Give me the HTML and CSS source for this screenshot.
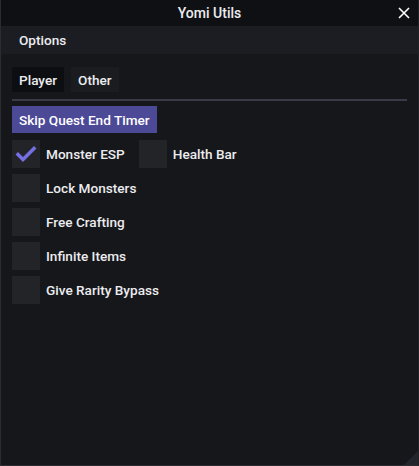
FILE: index.html
```html
<!DOCTYPE html>
<html lang="en">
<head>
  <meta charset="UTF-8" />
  <title>Yomi Utils</title>
  <link rel="stylesheet" href="styles.css">
</head>
<body>
  <div class="window">
    <div class="titlebar">
      <span class="title">Yomi Utils</span>
      <svg class="close" viewBox="0 0 12 12">
        <path d="M1 1L11 11M11 1L1 11"/>
      </svg>
    </div>

    <div class="menubar">
      <span class="menu-item">Options</span>
    </div>

    <div class="content">
      <div class="tabs">
        <span class="tab active">Player</span>
        <span class="tab">Other</span>
      </div>
      <div class="separator"></div>

      <button class="btn">Skip Quest End Timer</button>

      <div class="row">
        <label class="check">
          <span class="box">
            <svg viewBox="0 0 28 28"><path d="M6 14.5l5 5 11-11"/></svg>
          </span>
          Monster ESP
        </label>
        <label class="check">
          <span class="box"></span>
          Health Bar
        </label>
      </div>
      <div class="row">
        <label class="check"><span class="box"></span>Lock Monsters</label>
      </div>
      <div class="row">
        <label class="check"><span class="box"></span>Free Crafting</label>
      </div>
      <div class="row">
        <label class="check"><span class="box"></span>Infinite Items</label>
      </div>
      <div class="row">
        <label class="check"><span class="box"></span>Give Rarity Bypass</label>
      </div>
    </div>

    <div class="grip"></div>
  </div>
</body>
</html>
```

FILE: styles.css
```css
:root {
  --title-bg:  #0f1014;
  --menu-bg:   #1c1d22;
  --body-bg:   #15171b;
  --tab-on:    #0d0e11;
  --tab-off:   #1b1c20;
  --accent:    #4c4997;
  --box:       #222428;
  --check:     #7470e4;
  --line:      #3a3b47;
  --text:      #ececef;
}
* { box-sizing: border-box; margin: 0; padding: 0; }
html, body { width: 419px; height: 466px; overflow: hidden; }
body {
  background: var(--body-bg);
  font-family: Roboto, "Liberation Sans", sans-serif;
  font-weight: 500;
  font-size: 13.6px;
  color: var(--text);
}
.window {
  position: relative;
  width: 419px;
  height: 466px;
  display: flex;
  flex-direction: column;
  border-left: 1px solid #2a2c32;
  border-bottom: 1px solid #2a2c32;
  border-right: 1px solid #1f2126;
}
.titlebar {
  height: 26px;
  background: var(--title-bg);
  display: flex;
  align-items: center;
  justify-content: center;
  position: relative;
}
.title { font-size: 14px; }
.close {
  position: absolute;
  right: 8px;
  top: 7px;
  width: 12px;
  height: 12px;
  stroke: #fff;
  stroke-width: 1.6;
  fill: none;
}
.menubar {
  height: 28px;
  background: var(--menu-bg);
  display: flex;
  align-items: center;
  padding-left: 18px;
}
.content {
  flex: 1;
  padding: 13px 11px 0 11px;
}
.tabs { display: flex; gap: 7px; }
.tab {
  height: 25px;
  padding: 0 7px;
  display: flex;
  align-items: center;
  background: var(--tab-off);
}
.tab.active { background: var(--tab-on); }
.separator {
  height: 2px;
  background: var(--line);
  margin: 7px 0 5px;
  width: 395px;
}
.btn {
  height: 27px;
  padding: 0 7px;
  border: none;
  background: var(--accent);
  color: #fff;
  font: inherit;
  display: block;
}
.row {
  display: flex;
  gap: 14px;
  margin-top: 7px;
}
.row + .row { margin-top: 6px; }
.check {
  display: flex;
  align-items: center;
  gap: 6px;
}
.box {
  width: 28px;
  height: 28px;
  background: var(--box);
  display: flex;
  align-items: center;
  justify-content: center;
}
.box svg {
  width: 28px;
  height: 28px;
  fill: none;
  stroke: var(--check);
  stroke-width: 3.5;
  stroke-linecap: square;
}
.grip {
  position: absolute;
  right: 0;
  bottom: 0;
  width: 0;
  height: 0;
  border-left: 14px solid transparent;
  border-bottom: 14px solid #22262c;
}
```
